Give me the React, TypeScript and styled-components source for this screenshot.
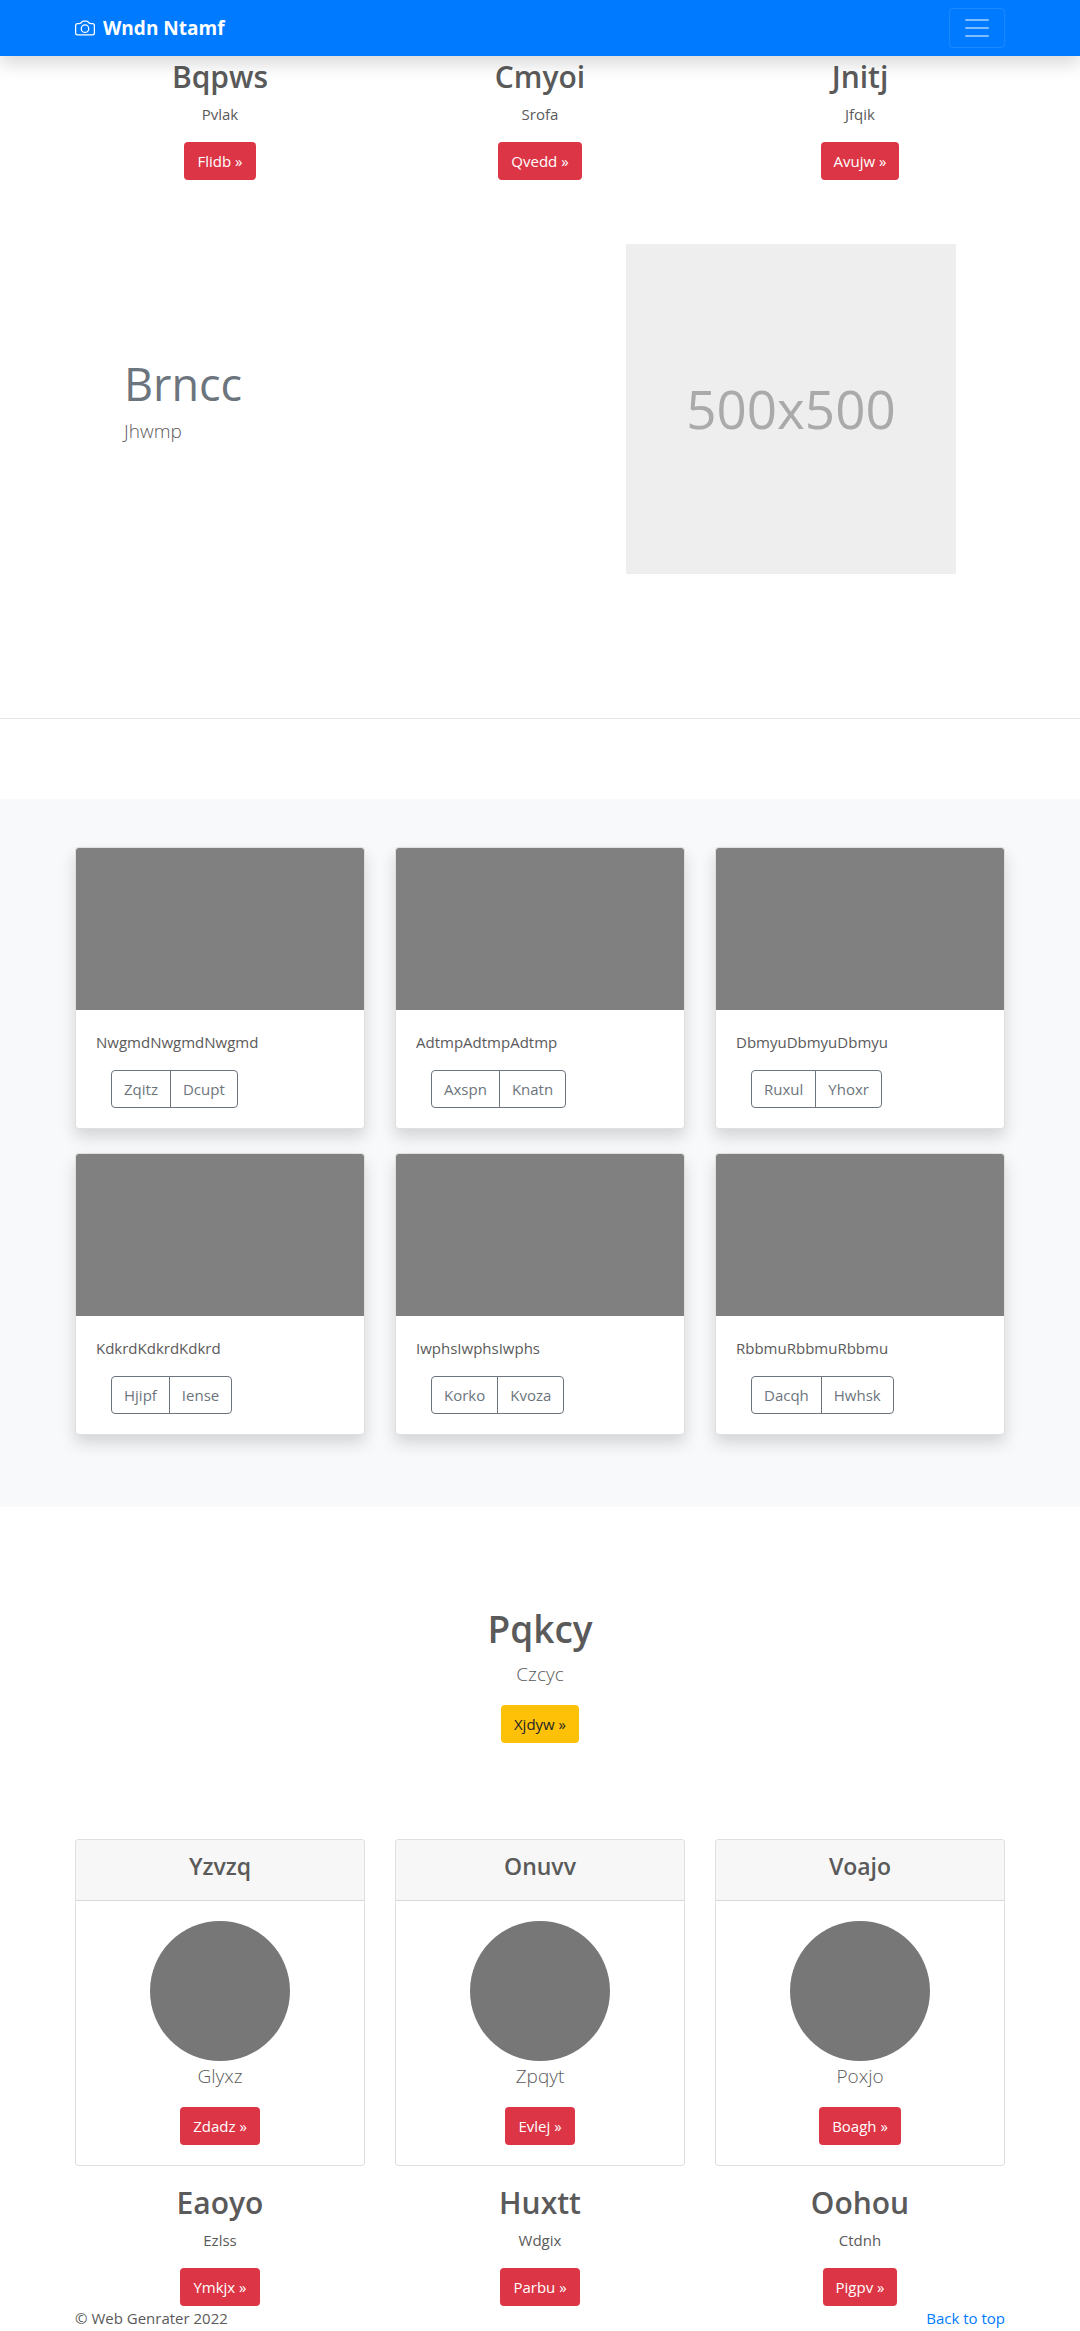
import React from "react";
import styled, { createGlobalStyle, css } from "styled-components";

const GlobalStyle = createGlobalStyle`
  *, *::before, *::after { box-sizing: border-box; }
  body {
    margin: 0;
    background: #fff;
    color: #5a5a5a;
    font-family: "Open Sans", "Noto Sans", sans-serif;
    font-size: 15px;
    line-height: 24px;
  }
  h1, h2, h4, p { margin: 0; }
`;

const Container = styled.div`
  width: 100%;
  max-width: 960px;
  margin: 0 auto;
  padding: 0 15px;
`;

const NavBar = styled.header`
  position: relative;
  z-index: 1;
  background: #007bff;
  padding: 8px 0;
  box-shadow: 0 8px 16px rgba(0, 0, 0, 0.15);
`;

const NavInner = styled(Container)`
  display: flex;
  align-items: center;
  justify-content: space-between;
`;

const Brand = styled.a`
  display: flex;
  align-items: center;
  gap: 8px;
  color: #fff;
  font-size: 19px;
  font-weight: 700;
  line-height: 30px;
  text-decoration: none;
`;

const Toggler = styled.button`
  display: flex;
  align-items: center;
  justify-content: center;
  width: 56px;
  height: 40px;
  padding: 0;
  background: transparent;
  border: 1px solid rgba(255, 255, 255, 0.1);
  border-radius: 4px;
  cursor: pointer;
`;

const Grid = styled.div<{ $rowGap?: number }>`
  display: grid;
  grid-template-columns: repeat(3, 1fr);
  column-gap: 30px;
  row-gap: ${(p) => p.$rowGap ?? 0}px;
`;

const Blurb = styled.div`
  display: flex;
  flex-direction: column;
  align-items: center;
  text-align: center;
`;

const BlurbTitle = styled.h2`
  margin-bottom: 4px;
  font-size: 30px;
  font-weight: 600;
  line-height: 42px;
`;

const BlurbText = styled.p`
  margin-bottom: 16px;
`;

const Lead = styled.p`
  margin-bottom: 16px;
  font-size: 19px;
  font-weight: 300;
  line-height: 30px;
`;

const ActionLink = styled.a<{ $tone?: "warning" }>`
  display: inline-block;
  padding: 7px 13px;
  border-radius: 4px;
  background: ${(p) => (p.$tone === "warning" ? "#ffc107" : "#dc3545")};
  color: ${(p) => (p.$tone === "warning" ? "#212529" : "#fff")};
  text-decoration: none;
`;

const Feature = styled(Container)`
  display: flex;
  align-items: center;
  justify-content: space-between;
  padding: 64px 64px 144px;
`;

const FeatureTitle = styled.h2`
  margin-bottom: 4px;
  color: #6c757d;
  font-size: 45px;
  font-weight: 400;
  line-height: 56px;
`;

const Placeholder = styled.div`
  display: flex;
  align-items: center;
  justify-content: center;
  width: 330px;
  height: 330px;
  background: #eee;
  color: #aaa;
  font-size: 53px;
  line-height: 64px;
`;

const Divider = styled.hr`
  margin: 0 0 80px;
  border: 0;
  border-top: 1px solid rgba(0, 0, 0, 0.1);
`;

const Album = styled.section`
  padding: 48px 0 72px;
  background: #f8f9fa;
`;

const cardFrame = css`
  border: 1px solid rgba(0, 0, 0, 0.125);
  border-radius: 4px;
  background-color: #fff;
  overflow: hidden;
`;

const PhotoCard = styled.article`
  ${cardFrame}
  box-shadow: 0 8px 16px rgba(0, 0, 0, 0.15);
`;

const Photo = styled.div`
  height: 162px;
  background: #808080;
`;

const PhotoBody = styled.div`
  padding: 20px;
`;

const ButtonGroup = styled.div`
  display: flex;
  padding-left: 15px;
`;

const GroupButton = styled.button`
  padding: 6px 12px;
  border: 1px solid #6c757d;
  background: transparent;
  color: #6c757d;
  font: inherit;
  cursor: pointer;

  &:first-child { border-radius: 4px 0 0 4px; }
  &:last-child { margin-left: -1px; border-radius: 0 4px 4px 0; }
`;

const Pricing = styled(Blurb)`
  padding: 96px 15px;
`;

const PricingTitle = styled.h1`
  margin-bottom: 4px;
  font-size: 37px;
  font-weight: 600;
  line-height: 52px;
`;

const PlanCard = styled.article`
  ${cardFrame}
  margin-bottom: 16px;
  text-align: center;
`;

const PlanHeader = styled.div`
  padding: 12px 20px 20px;
  border-bottom: 1px solid rgba(0, 0, 0, 0.125);
  background: #f7f7f7;
`;

const PlanName = styled.h4`
  font-size: 23px;
  font-weight: 600;
  line-height: 28px;
`;

const PlanBody = styled(Blurb)`
  padding: 20px;
`;

const Avatar = styled.div`
  width: 140px;
  height: 140px;
  border-radius: 50%;
  background: #777;
`;

const FooterBar = styled(Container)`
  display: flex;
  justify-content: space-between;
`;

const FooterLink = styled.a`
  color: #007bff;
  text-decoration: none;
`;

const topBlurbs = [
  { title: "Bqpws", text: "Pvlak", action: "Flidb" },
  { title: "Cmyoi", text: "Srofa", action: "Qvedd" },
  { title: "Jnitj", text: "Jfqik", action: "Avujw" },
];

const photos = [
  { text: "NwgmdNwgmdNwgmd", actions: ["Zqitz", "Dcupt"] },
  { text: "AdtmpAdtmpAdtmp", actions: ["Axspn", "Knatn"] },
  { text: "DbmyuDbmyuDbmyu", actions: ["Ruxul", "Yhoxr"] },
  { text: "KdkrdKdkrdKdkrd", actions: ["Hjipf", "Iense"] },
  { text: "IwphsIwphsIwphs", actions: ["Korko", "Kvoza"] },
  { text: "RbbmuRbbmuRbbmu", actions: ["Dacqh", "Hwhsk"] },
];

const plans = [
  { name: "Yzvzq", text: "Glyxz", action: "Zdadz" },
  { name: "Onuvv", text: "Zpqyt", action: "Evlej" },
  { name: "Voajo", text: "Poxjo", action: "Boagh" },
];

const bottomBlurbs = [
  { title: "Eaoyo", text: "Ezlss", action: "Ymkjx" },
  { title: "Huxtt", text: "Wdgix", action: "Parbu" },
  { title: "Oohou", text: "Ctdnh", action: "Pigpv" },
];

function BlurbRow({ items }: { items: typeof topBlurbs }) {
  return (
    <Grid>
      {items.map((item) => (
        <Blurb key={item.title}>
          <BlurbTitle>{item.title}</BlurbTitle>
          <BlurbText>{item.text}</BlurbText>
          <ActionLink href="#">{item.action} »</ActionLink>
        </Blurb>
      ))}
    </Grid>
  );
}

function CameraIcon() {
  return (
    <svg width="20" height="20" viewBox="0 0 16 16" fill="#fff" aria-hidden="true">
      <path d="M15 12a1 1 0 0 1-1 1H2a1 1 0 0 1-1-1V6a1 1 0 0 1 1-1h1.172a3 3 0 0 0 2.12-.879l.83-.828A1 1 0 0 1 6.827 3h2.344a1 1 0 0 1 .707.293l.828.828A3 3 0 0 0 12.828 5H14a1 1 0 0 1 1 1v6zM2 4a2 2 0 0 0-2 2v6a2 2 0 0 0 2 2h12a2 2 0 0 0 2-2V6a2 2 0 0 0-2-2h-1.172a2 2 0 0 1-1.414-.586l-.828-.828A2 2 0 0 0 9.172 2H6.828a2 2 0 0 0-1.414.586l-.828.828A2 2 0 0 1 3.172 4H2z" />
      <path d="M8 11a2.500 2.500 0 1 1 0-5 2.500 2.500 0 0 1 0 5zm0 1a3.500 3.500 0 1 0 0-7 3.500 3.500 0 0 0 0 7z" />
    </svg>
  );
}

export default function App() {
  return (
    <>
      <GlobalStyle />
      <NavBar>
        <NavInner>
          <Brand href="#">
            <CameraIcon />
            Wndn Ntamf
          </Brand>
          <Toggler type="button" aria-label="Toggle navigation">
            <svg width="30" height="30" viewBox="0 0 30 30" aria-hidden="true">
              <path
                stroke="rgba(255,255,255,0.5)"
                strokeLinecap="round"
                strokeWidth="2"
                d="M4 7h22M4 15h22M4 23h22"
              />
            </svg>
          </Toggler>
        </NavInner>
      </NavBar>
      <main>
        <Container>
          <BlurbRow items={topBlurbs} />
        </Container>
        <Feature>
          <div>
            <FeatureTitle>Brncc</FeatureTitle>
            <Lead>Jhwmp</Lead>
          </div>
          <Placeholder>500x500</Placeholder>
        </Feature>
        <Divider />
        <Album>
          <Container>
            <Grid $rowGap={24}>
              {photos.map((photo) => (
                <PhotoCard key={photo.text}>
                  <Photo />
                  <PhotoBody>
                    <BlurbText>{photo.text}</BlurbText>
                    <ButtonGroup>
                      {photo.actions.map((action) => (
                        <GroupButton type="button" key={action}>
                          {action}
                        </GroupButton>
                      ))}
                    </ButtonGroup>
                  </PhotoBody>
                </PhotoCard>
              ))}
            </Grid>
          </Container>
        </Album>
        <Pricing>
          <PricingTitle>Pqkcy</PricingTitle>
          <Lead>Czcyc</Lead>
          <ActionLink href="#" $tone="warning">
            Xjdyw »
          </ActionLink>
        </Pricing>
        <Container>
          <Grid>
            {plans.map((plan) => (
              <PlanCard key={plan.name}>
                <PlanHeader>
                  <PlanName>{plan.name}</PlanName>
                </PlanHeader>
                <PlanBody>
                  <Avatar />
                  <Lead>{plan.text}</Lead>
                  <ActionLink href="#">{plan.action} »</ActionLink>
                </PlanBody>
              </PlanCard>
            ))}
          </Grid>
          <BlurbRow items={bottomBlurbs} />
        </Container>
      </main>
      <footer>
        <FooterBar>
          <span>© Web Genrater 2022</span>
          <FooterLink href="#">Back to top</FooterLink>
        </FooterBar>
      </footer>
    </>
  );
}
